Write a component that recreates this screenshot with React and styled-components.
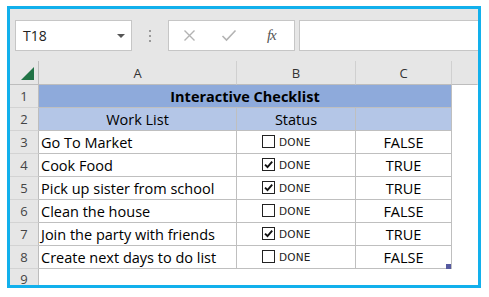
import React from "react";
import styled, {createGlobalStyle} from "styled-components";

const GlobalStyle = createGlobalStyle`
  body {
    margin: 0;
    background: #ffffff;
    font-family: "Open Sans", "Lato", sans-serif;
  }
`

const Frame = styled.div`
  margin: 6px 0 0 7px;
  width: 474px;
  height: 282px;
  border: 3px solid #12b0ec;
  box-sizing: border-box;
  background: #ffffff;
  display: flex;
  flex-direction: column;
  overflow: hidden;
`

const Toolbar = styled.div`
  height: 52px;
  flex-shrink: 0;
  box-sizing: border-box;
  padding: 11px 0 0 5px;
  background: #e6e6e6;
  display: flex;
  align-items: flex-start;
`

const NameBox = styled.div`
  width: 117px;
  height: 31px;
  box-sizing: border-box;
  border: 1px solid #c6c6c6;
  background: #ffffff;
  display: flex;
  align-items: center;
  justify-content: space-between;
  padding: 0 6px 0 7px;
  font-size: 14px;
  color: #222;
`

const Caret = styled.span`
  width: 0;
  height: 0;
  border-left: 4px solid transparent;
  border-right: 4px solid transparent;
  border-top: 4px solid #555;
`

const Dots = styled.div`
  width: 36px;
  height: 31px;
  display: flex;
  flex-direction: column;
  align-items: center;
  justify-content: center;
  gap: 3px;
  span {
    width: 2px;
    height: 2px;
    background: #9a9a9a;
  }
`

const FormulaButtons = styled.div`
  width: 127px;
  height: 31px;
  box-sizing: border-box;
  border: 1px solid #c6c6c6;
  background: #ffffff;
  display: flex;
  align-items: center;
  padding-left: 1px;
`

const ToolButton = styled.span`
  width: ${p => p.$w || 40}px;
  display: flex;
  align-items: center;
  justify-content: center;
`

const Fx = styled.span`
  font-family: "Liberation Serif", serif;
  font-style: italic;
  font-size: 15px;
  color: #555;
  letter-spacing: -1px;
`

const FormulaInput = styled.div`
  flex: 1;
  height: 31px;
  margin-left: 4px;
  box-sizing: border-box;
  border: 1px solid #c6c6c6;
  border-right: none;
  background: #ffffff;
`

const Sheet = styled.div`
  flex: 1;
  display: grid;
  grid-template-columns: 29px 198px 119px 96px 1fr;
  grid-template-rows: 24px repeat(8, 23px) 1fr;
  position: relative;
`

const Corner = styled.div`
  background: #e6e6e6;
  border-right: 1px solid #bdbdbd;
  border-bottom: 1px solid #bdbdbd;
  display: flex;
  align-items: flex-end;
  justify-content: flex-end;
  padding: 0 4px 4px 0;
  &::after {
    content: "";
    width: 0;
    height: 0;
    border-left: 13px solid transparent;
    border-bottom: 13px solid #217346;
  }
`

const ColHead = styled.div`
  background: #e6e6e6;
  border-right: 1px solid ${p => (p.$last ? "transparent" : "#d0d0d0")};
  border-bottom: 1px solid #bdbdbd;
  display: flex;
  align-items: center;
  justify-content: center;
  font-size: 13px;
  color: #333;
`

const RowHead = styled.div`
  background: #e6e6e6;
  border-right: 1px solid #bdbdbd;
  border-bottom: 1px solid ${p => (p.$last ? "transparent" : "#d3d3d3")};
  display: flex;
  align-items: ${p => (p.$last ? "flex-start" : "center")};
  justify-content: center;
  padding-top: ${p => (p.$last ? "1px" : "0")};
  font-size: 13px;
  color: #444;
`

const Cell = styled.div`
  grid-column: ${p => p.$span || "auto"};
  background: ${p => p.$bg || "#ffffff"};
  border-right: 1px solid ${p => (p.$plain ? "transparent" : "#bfbfbf")};
  border-bottom: 1px solid ${p => (p.$plain ? "transparent" : "#bfbfbf")};
  display: flex;
  align-items: center;
  justify-content: ${p => p.$align || "flex-start"};
  padding-left: ${p => (p.$align ? "0" : "2px")};
  padding-top: 1px;
  box-sizing: border-box;
  font-size: 14.5px;
  font-weight: ${p => (p.$bold ? 700 : 400)};
  color: #000;
  white-space: nowrap;
`

const CheckCell = styled(Cell)`
  align-items: flex-start;
  padding: 4px 0 0 25px;
  gap: 4px;
`

const Box = styled.span`
  width: 13px;
  height: 13px;
  box-sizing: border-box;
  border: 1px solid #222;
  background: #fff;
  display: flex;
  align-items: center;
  justify-content: center;
`

const Done = styled.span`
  font-family: "DejaVu Sans", sans-serif;
  font-size: 10.5px;
  line-height: 14px;
  letter-spacing: 0.2px;
  color: #222;
`

const FillHandle = styled.span`
  position: absolute;
  left: 436px;
  top: 203px;
  width: 5px;
  height: 5px;
  background: #565aa0;
`

const tasks = [
    {text: "Go To Market", done: false},
    {text: "Cook Food", done: true},
    {text: "Pick up sister from school", done: true},
    {text: "Clean the house", done: false},
    {text: "Join the party with friends", done: true},
    {text: "Create next days to do list", done: false},
]

const Check = () => (
    <svg width="11" height="11" viewBox="0 0 11 11">
        <path d="M2 5.6 L4.5 8 L9.2 2.6" fill="none" stroke="#111" strokeWidth="1.9"/>
    </svg>
)

const X = () => (
    <svg width="13" height="13" viewBox="0 0 13 13">
        <path d="M1.5 1.5 L11.5 11.5 M11.5 1.5 L1.5 11.5" stroke="#b3b3b3" strokeWidth="1.4"/>
    </svg>
)

const Tick = () => (
    <svg width="16" height="13" viewBox="0 0 16 13">
        <path d="M1.5 7 L5.5 11 L14.5 1.5" fill="none" stroke="#b3b3b3" strokeWidth="1.6"/>
    </svg>
)

const App = () => {
    return (
        <>
            <GlobalStyle/>
            <Frame>
                <Toolbar>
                    <NameBox>T18<Caret/></NameBox>
                    <Dots><span/><span/><span/></Dots>
                    <FormulaButtons>
                        <ToolButton><X/></ToolButton>
                        <ToolButton><Tick/></ToolButton>
                        <ToolButton $w={46}><Fx>fx</Fx></ToolButton>
                    </FormulaButtons>
                    <FormulaInput/>
                </Toolbar>
                <Sheet>
                    <Corner/>
                    <ColHead>A</ColHead>
                    <ColHead>B</ColHead>
                    <ColHead>C</ColHead>
                    <ColHead $last/>

                    <RowHead>1</RowHead>
                    <Cell $span="span 3" $bg="#8eaadb" $align="center" $bold>Interactive Checklist</Cell>
                    <Cell $plain/>

                    <RowHead>2</RowHead>
                    <Cell $bg="#b4c6e7" $align="center">Work List</Cell>
                    <Cell $bg="#b4c6e7" $align="center">Status</Cell>
                    <Cell $bg="#b4c6e7"/>
                    <Cell $plain/>

                    {tasks.map((t, i) => (
                        <React.Fragment key={t.text}>
                            <RowHead>{i + 3}</RowHead>
                            <Cell>{t.text}</Cell>
                            <CheckCell>
                                <Box>{t.done && <Check/>}</Box>
                                <Done>DONE</Done>
                            </CheckCell>
                            <Cell $align="center">{t.done ? "TRUE" : "FALSE"}</Cell>
                            <Cell $plain/>
                        </React.Fragment>
                    ))}

                    <RowHead $last>9</RowHead>
                    <Cell $plain/>
                    <Cell $plain/>
                    <Cell $plain/>
                    <Cell $plain/>
                    <FillHandle/>
                </Sheet>
            </Frame>
        </>
    )
}

export default App
